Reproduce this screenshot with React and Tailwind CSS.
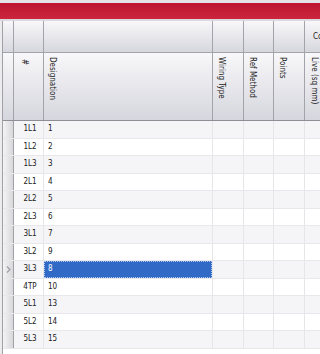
import React from "react";

const rows = [
  ["1L1", "1"], ["1L2", "2"], ["1L3", "3"], ["2L1", "4"], ["2L2", "5"], ["2L3", "6"],
  ["3L1", "7"], ["3L2", "9"], ["3L3", "8"], ["4TP", "10"], ["5L1", "13"], ["5L2", "14"], ["5L3", "15"],
];

function HCell({ w, children, className = "" }) {
  return (
    <div className={`${w} shrink-0 h-full border-r border-[#a3a3aa] bg-linear-to-b from-[#f8f8fa] to-[#d6d6de] ${className}`}>
      {children}
    </div>
  );
}

function VText({ children }) {
  return <span className="[writing-mode:vertical-rl] leading-[8px] whitespace-nowrap">{children}</span>;
}

export default function App() {
  return (
    <div className="w-[320px] h-[354px] overflow-hidden bg-white flex flex-col text-[8px] text-[#1a1a1a]" style={{ fontFamily: '"DejaVu Sans Condensed", "DejaVu Sans", sans-serif', fontStretch: "condensed" }}>
      <div className="h-[3px] shrink-0 bg-[#e4e4e6]" />
      <div className="h-[16px] shrink-0 bg-linear-to-b from-[#bd1430] to-[#cb263d]" />
      <div className="h-[2px] shrink-0 bg-[#dadade]" />
      <div className="flex flex-1 min-h-0">
        <div className="w-[3px] shrink-0 bg-[#ececee] border-r border-[#a0a0a6]" />
        <div className="flex-1 min-w-0 flex flex-col overflow-hidden">
          <div className="flex h-[32px] shrink-0 border-b border-[#a3a3aa]">
            <HCell w="w-[11px]" />
            <HCell w="w-[30px]" />
            <HCell w="w-[169px]" />
            <HCell w="w-[31px]" />
            <HCell w="w-[30px]" />
            <HCell w="w-[31px]" />
            <div className="w-[80px] shrink-0 h-full bg-linear-to-b from-[#f8f8fa] to-[#d6d6de] flex items-center pl-[8px] whitespace-nowrap">
              Conductors
            </div>
          </div>
          <div className="flex h-[68px] shrink-0 border-b border-[#8e8e96]">
            <HCell w="w-[11px]" />
            <HCell w="w-[30px]" className="pl-[6px] pt-[4px]"><VText>#</VText></HCell>
            <HCell w="w-[169px]" className="pl-[4px] pt-[4px]"><VText>Designation</VText></HCell>
            <HCell w="w-[31px]" className="pl-[4px] pt-[4px]"><VText>Wiring Type</VText></HCell>
            <HCell w="w-[30px]" className="pl-[4px] pt-[4px]"><VText>Ref Method</VText></HCell>
            <HCell w="w-[31px]" className="pl-[4px] pt-[4px]"><VText>Points</VText></HCell>
            <div className="w-[80px] shrink-0 h-full bg-linear-to-b from-[#f8f8fa] to-[#d6d6de] pl-[5px] pt-[4px]">
              <VText>Live (sq mm)</VText>
            </div>
          </div>
          {rows.map(([id, des], i) => {
            const odd = i % 2 === 0;
            const sel = id === "3L3";
            const bg = odd ? "bg-[#f5f4f7]" : "bg-white";
            return (
              <div key={id} className={`flex h-[17.5px] shrink-0 border-b border-[#e8e8ec] ${bg}`}>
                <div className="w-[11px] shrink-0 h-full border-r border-[#a0a0a6] bg-linear-to-r from-[#f4f4f5] to-[#d8d8dc] flex items-center justify-center">
                  {sel && (
                    <svg width="5" height="7" viewBox="0 0 5 7">
                      <path d="M1 0.5 L4 3.5 L1 6.5" fill="none" stroke="#9a9aa0" strokeWidth="1.1" />
                    </svg>
                  )}
                </div>
                <div className="w-[30px] shrink-0 h-full border-r border-[#e6e6ea] flex items-center justify-center pl-[3px]">
                  {id}
                </div>
                {sel ? (
                  <div className="w-[169px] shrink-0 h-full border-r border-[#e6e6ea] bg-[#3169c6] flex items-center">
                    <div className="w-full h-full border border-dotted border-[#b5cbef] flex items-center pl-[3px] text-white">{des}</div>
                  </div>
                ) : (
                  <div className="w-[169px] shrink-0 h-full border-r border-[#e6e6ea] flex items-center pl-[4px]">{des}</div>
                )}
                <div className="w-[31px] shrink-0 h-full border-r border-[#e6e6ea]" />
                <div className="w-[30px] shrink-0 h-full border-r border-[#e6e6ea]" />
                <div className="w-[31px] shrink-0 h-full border-r border-[#e6e6ea]" />
                <div className="w-[80px] shrink-0 h-full" />
              </div>
            );
          })}
        </div>
      </div>
    </div>
  );
}
